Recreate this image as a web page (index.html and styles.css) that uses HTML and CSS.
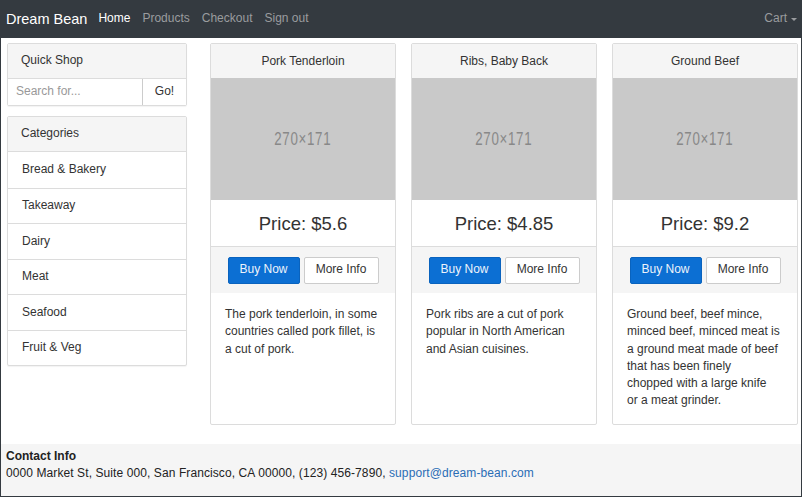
FILE: index.html
```html
<!DOCTYPE html>
<html>
<head>
<meta charset="utf-8">
<link rel="stylesheet" href="styles.css">
</head>
<body>
<div class="page">
  <nav class="navbar">
    <a class="brand">Dream Bean</a>
    <ul class="nav">
      <li class="active">Home</li>
      <li>Products</li>
      <li>Checkout</li>
      <li>Sign out</li>
    </ul>
    <div class="cart">Cart <span class="caret"></span></div>
  </nav>

  <div class="content">
    <aside class="sidebar">
      <div class="panel">
        <div class="panel-heading">Quick Shop</div>
        <div class="input-group">
          <input class="search" type="text" placeholder="Search for...">
          <button class="go">Go!</button>
        </div>
      </div>
      <div class="panel">
        <div class="panel-heading">Categories</div>
        <ul class="list">
          <li>Bread &amp; Bakery</li>
          <li>Takeaway</li>
          <li>Dairy</li>
          <li>Meat</li>
          <li>Seafood</li>
          <li>Fruit &amp; Veg</li>
        </ul>
      </div>
    </aside>

    <main class="products">
      <div class="card">
        <div class="card-heading">Pork Tenderloin</div>
        <div class="thumb"><span class="thumb-label">270×171</span></div>
        <div class="price">Price: $5.6</div>
        <div class="actions"><button class="btn btn-primary">Buy Now</button><button class="btn btn-default">More Info</button></div>
        <div class="card-body">The pork tenderloin, in some countries called pork fillet, is a cut of pork.</div>
      </div>
      <div class="card">
        <div class="card-heading">Ribs, Baby Back</div>
        <div class="thumb"><span class="thumb-label">270×171</span></div>
        <div class="price">Price: $4.85</div>
        <div class="actions"><button class="btn btn-primary">Buy Now</button><button class="btn btn-default">More Info</button></div>
        <div class="card-body">Pork ribs are a cut of pork popular in North American and Asian cuisines.</div>
      </div>
      <div class="card">
        <div class="card-heading">Ground Beef</div>
        <div class="thumb"><span class="thumb-label">270×171</span></div>
        <div class="price">Price: $9.2</div>
        <div class="actions"><button class="btn btn-primary">Buy Now</button><button class="btn btn-default">More Info</button></div>
        <div class="card-body">Ground beef, beef mince, minced beef, minced meat is a ground meat made of beef that has been finely chopped with a large knife or a meat grinder.</div>
      </div>
    </main>
  </div>

  <footer class="footer">
    <div class="footer-title">Contact Info</div>
    <div class="address">0000 Market St, Suite 000, San Francisco, CA 00000, (123) 456-7890, <a class="mail">support@dream-bean.com</a></div>
  </footer>
</div>
</body>
</html>
```

FILE: styles.css
```css
* { box-sizing: border-box; }
html, body { margin: 0; padding: 0; }
body {
  font-family: "Liberation Sans", Arial, sans-serif;
  font-size: 12px;
  line-height: 1.43;
  color: #333;
  background: #fff;
}
.page {
  height: 497px;
  border-left: 1px solid #343a40;
  border-right: 1px solid #343a40;
  border-bottom: 1px solid #343a40;
  display: flex;
  flex-direction: column;
}
.navbar {
  height: 38px;
  flex: none;
  background: #343a40;
  display: flex;
  align-items: center;
  padding: 0 5px 0 5px;
  margin: 0 -1px;
}
.brand {
  color: #fff;
  font-size: 14.5px;
  margin-left: 1px;
  margin-right: 5px;
}
.nav {
  list-style: none;
  margin: 0;
  padding: 0;
  display: flex;
}
.nav li {
  color: #9a9c9f;
  font-size: 12px;
  padding: 0 6px;
}
.nav li.active { color: #fff; }
.cart {
  margin-left: auto;
  color: #9a9c9f;
  font-size: 12px;
  display: flex;
  align-items: center;
}
.caret {
  display: inline-block;
  width: 0;
  height: 0;
  margin-left: 4px;
  margin-top: 1px;
  border-left: 3px solid transparent;
  border-right: 3px solid transparent;
  border-top: 3px solid #9a9c9f;
}
.content {
  display: flex;
  padding: 5px 4px 0 6px;
  gap: 23px;
  align-items: flex-start;
  flex: 1;
}
.sidebar {
  width: 180px;
  flex: none;
}
.panel {
  border: 1px solid #dcdcdc;
  border-radius: 2px;
  background: #fff;
  margin-bottom: 10px;
  box-shadow: 0 1px 1px rgba(0,0,0,.05);
}
.panel-heading {
  height: 35px;
  background: #f5f5f5;
  border-bottom: 1px solid #dcdcdc;
  padding: 0 13px;
  display: flex;
  align-items: center;
}
.input-group {
  display: flex;
  height: 26px;
}
.search {
  flex: 1;
  min-width: 0;
  border: 0;
  border-right: 1px solid #ccc;
  font: inherit;
  padding: 0 8px;
  color: #555;
  outline: none;
}
.search::placeholder { color: #999; }
.go {
  width: 43px;
  border: 0;
  background: #fff;
  font: inherit;
  color: #333;
  padding: 0;
}
.list {
  list-style: none;
  margin: 0;
  padding: 0;
}
.list li {
  height: 35.5px;
  padding: 0 14px;
  display: flex;
  align-items: center;
  border-top: 1px solid #dcdcdc;
}
.list li:first-child { border-top: 0; }
.products {
  flex: 1;
  display: grid;
  grid-template-columns: repeat(3, 186px);
  column-gap: 15px;
  align-items: stretch;
}
.card {
  border: 1px solid #dcdcdc;
  border-radius: 2px;
  display: flex;
  flex-direction: column;
  background: #fff;
}
.card-heading {
  height: 34px;
  padding-top: 1px;
  background: #f5f5f5;
  display: flex;
  align-items: center;
  justify-content: center;
}
.thumb {
  height: 122px;
  background: #c9c9c9;
  display: flex;
  align-items: center;
  justify-content: center;
}
.thumb-label {
  display: inline-block;
  color: #888;
  font-size: 19px;
  letter-spacing: 1px;
  transform: scaleX(0.7);
}
.price {
  height: 47px;
  padding-top: 3px;
  display: flex;
  align-items: center;
  justify-content: center;
  font-size: 18.5px;
  color: #333;
  border-bottom: 1px solid #dcdcdc;
}
.actions {
  height: 46px;
  background: #f5f5f5;
  display: flex;
  align-items: center;
  justify-content: center;
  gap: 4px;
}
.btn {
  height: 27px;
  font: inherit;
  border-radius: 2px;
  padding: 0;
}
.btn-primary {
  width: 72px;
  background: #0c6fd3;
  border: 1px solid #0a63be;
  color: #eef3fb;
}
.btn-default {
  width: 75px;
  background: #fff;
  border: 1px solid #ccc;
  color: #333;
}
.card-body {
  padding: 13px 17px 14px 14px;
  line-height: 17.3px;
  flex: 1;
}
.footer {
  flex: none;
  height: 52px;
  background: #f5f5f5;
  padding: 4px 5px 0 5px;
  line-height: 17px;
  color: #222;
}
.footer-title { font-weight: bold; }
.address { letter-spacing: 0.09px; }
.mail { color: #2a6db5; }
```
